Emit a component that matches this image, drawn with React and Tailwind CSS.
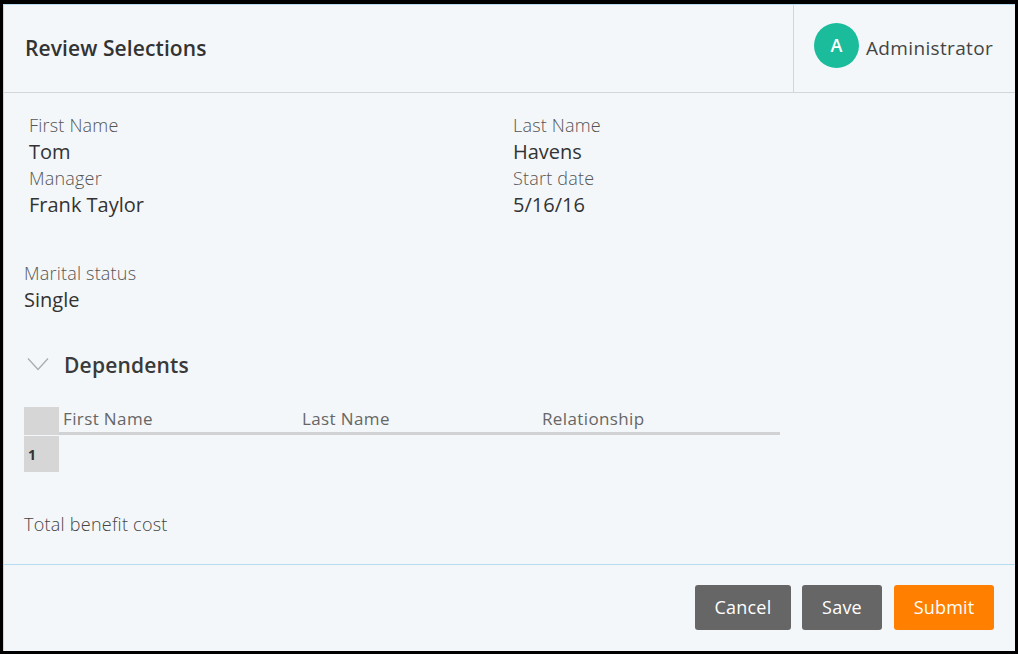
export default function App() {
  const font = { fontFamily: '"Open Sans", sans-serif' };
  const Field = ({ label, value }) => (
    <div className="flex flex-col">
      <div className="h-[26px] -mt-px mb-px text-[18px] tracking-[0.2px] leading-[26px] font-light text-[#555]">{label}</div>
      <div className="h-[27px] -mt-px mb-px text-[20px] leading-[27px] text-[#333]">{value}</div>
    </div>
  );
  return (
    <div style={font} className="w-[1018px] h-[654px] bg-black pt-[4px] pl-[3px] pr-[3px] pb-[3px]">
      <div className="w-full h-full bg-[#f4f7f9] flex flex-col border-l border-t border-[#b5dcf0]">
        <div className="h-[88px] shrink-0 flex border-b border-[#d2d6d8]">
          <div className="flex-1 flex items-center pl-[21px] text-[21px] tracking-[0.1px] font-semibold text-[#333]">Review Selections</div>
          <div className="w-[222px] border-l border-[#d2d6d8] flex items-center pl-[20px]">
            <div className="w-[45px] h-[45px] -mt-[6px] rounded-full bg-[#1abc9c] flex items-center justify-center text-white text-[18px] font-semibold">A</div>
            <div className="ml-[7px] text-[19px] text-[#444] tracking-[0.35px]">Administrator</div>
          </div>
        </div>
        <div className="flex-1 flex flex-col pl-[20px] pt-[20px]">
          <div className="grid grid-cols-[484px_1fr] pl-[5px]">
            <div className="flex flex-col">
              <Field label="First Name" value="Tom" />
              <Field label="Manager" value="Frank Taylor" />
            </div>
            <div className="flex flex-col">
              <Field label="Last Name" value="Havens" />
              <Field label="Start date" value="5/16/16" />
            </div>
          </div>
          <div className="mt-[42px]">
            <Field label="Marital status" value="Single" />
          </div>
          <div className="mt-[33px] flex items-center h-[38px]">
            <svg width="26" height="16" viewBox="0 0 26 16" fill="none" stroke="#a9adb0" strokeWidth="1.3" className="-mt-[4px]">
              <path d="M4 2.5 L14 13.5 L24 2.5" />
            </svg>
            <span className="ml-[14px] text-[21px] tracking-[0.2px] font-semibold text-[#3a3a3a]">Dependents</span>
          </div>
          <div className="mt-[22px] w-[756px]">
            <div className="flex h-[28px]">
              <div className="w-[35px] bg-[#d6d6d6] shrink-0" />
              <div className="flex-1 grid grid-cols-[239px_240px_1fr] pl-[4px] border-b-[3px] border-[#d0d2d3] text-[17px] tracking-[0.38px] font-medium text-[#666] leading-[23px]">
                <div>First Name</div>
                <div>Last Name</div>
                <div>Relationship</div>
              </div>
            </div>
            <div className="w-[35px] h-[36px] mt-px bg-[#d6d6d6] flex items-center pl-[4px] text-[14px] font-bold text-[#333]">1</div>
          </div>
          <div className="mt-[39px] text-[18px] tracking-[0.25px] leading-[26px] font-light text-[#444]">Total benefit cost</div>
        </div>
        <div className="h-[87px] shrink-0 border-t border-[#b5dcf0] flex items-center justify-end gap-[11px] pr-[21px] pb-[2px]">
          <button className="w-[96px] h-[45px] rounded-[3px] bg-[#666] text-white text-[18px] tracking-[0.2px] font-medium">Cancel</button>
          <button className="w-[80px] h-[45px] rounded-[3px] bg-[#666] text-white text-[18px] tracking-[0.2px] font-medium">Save</button>
          <button className="w-[100px] h-[45px] ml-px rounded-[3px] bg-[#ff8000] text-white text-[18px] tracking-[0.2px] font-medium">Submit</button>
        </div>
      </div>
    </div>
  );
}
